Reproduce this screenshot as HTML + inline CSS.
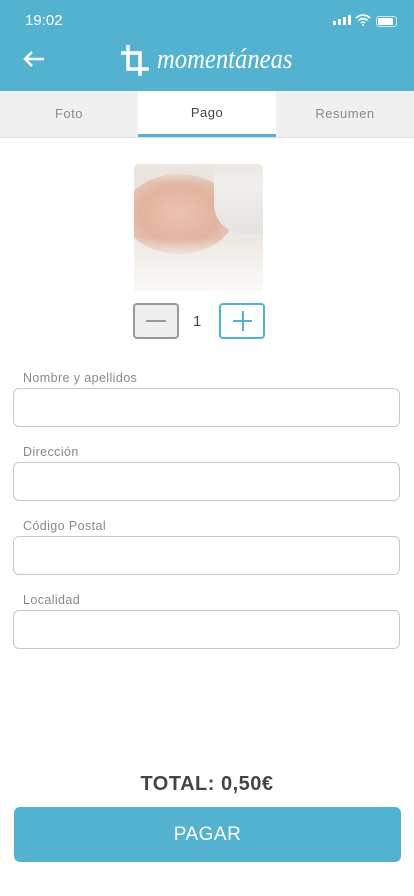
<!DOCTYPE html><html><head><meta charset="utf-8"><style>
*{margin:0;padding:0;box-sizing:border-box}
body{width:414px;height:896px;background:#fff;font-family:"Liberation Sans",sans-serif;position:relative;overflow:hidden}
.hdr{position:absolute;left:0;top:0;width:414px;height:91px;background:#52b2cf;color:#fff}
.tabs{position:absolute;top:91px;left:0;width:414px;height:47px;display:flex;background:#f0f0f0;border-bottom:1px solid #e0e0e0}
.tab{flex:1;text-align:center;line-height:46px;font-size:13px;color:#8a8a8a;letter-spacing:.5px}
.tab.a{background:#fff;color:#444;border-bottom:3px solid #52b2cf;line-height:44px}
.lbl{position:absolute;left:23px;font-size:12.5px;color:#888;letter-spacing:.4px}
.inp{position:absolute;left:13px;width:387px;height:39px;border:1px solid #c8c8c8;border-radius:6px}
</style></head><body>
<div class="hdr">
<div style="position:absolute;left:25px;top:12px;font-size:15px">19:02</div>
<div style="position:absolute;left:333px;top:15px;display:flex;gap:2px;align-items:flex-end"><i style="width:3px;height:4px;background:#fff"></i><i style="width:3px;height:6px;background:#fff"></i><i style="width:3px;height:8px;background:#fff"></i><i style="width:3px;height:10px;background:#fff"></i></div>
<svg style="position:absolute;left:355px;top:14px" width="16" height="12" viewBox="0 0 16 12"><path d="M1 4a10 10 0 0 1 14 0M3.5 6.5a6.5 6.5 0 0 1 9 0M6 9a3 3 0 0 1 4 0" stroke="#fff" stroke-width="1.8" fill="none"/><circle cx="8" cy="11" r="1" fill="#fff"/></svg>
<div style="position:absolute;left:376px;top:16px;width:21px;height:11px;border:1px solid rgba(255,255,255,.7);border-radius:3px;padding:1px"><div style="width:15px;height:7px;background:#fff;border-radius:1px"></div></div>
<svg style="position:absolute;left:22px;top:50px" width="24" height="18" viewBox="0 0 24 18"><path d="M22 9H3M10 2L3 9l7 7" stroke="#fff" stroke-width="2.5" fill="none"/></svg>
<svg style="position:absolute;left:120px;top:44px" width="30" height="33" viewBox="0 0 30 33"><path d="M8 1v24h21M1 9h19v23" stroke="#fff" stroke-width="3.5" fill="none"/></svg>
<div style="position:absolute;left:157px;top:44px;font-family:'Liberation Serif',serif;font-style:italic;font-size:28px;transform:scaleX(0.88);transform-origin:left">momentáneas</div>
</div>
<div class="tabs"><div class="tab">Foto</div><div class="tab a">Pago</div><div class="tab">Resumen</div></div>
<div style="position:absolute;left:134px;top:164px;width:129px;height:129px;border-radius:5px;overflow:hidden;background:linear-gradient(#e8e2dc,#f0ece8)">
<div style="position:absolute;left:-10px;top:10px;width:110px;height:80px;border-radius:50%;background:radial-gradient(ellipse,#ecc2ae 0,#e2b39f 50%,#e8d8ce 100%)"></div>
<div style="position:absolute;left:80px;top:0;width:60px;height:70px;background:linear-gradient(#f4f3f3,#e6e2e0);border-radius:0 0 0 30px"></div>
<div style="position:absolute;left:0;top:0;width:129px;height:20px;background:linear-gradient(#ece6df,#ece6df00)"></div>
<div style="position:absolute;left:0;bottom:0;width:129px;height:55px;background:linear-gradient(#f3efeb00,#f3efeb 40%,#fbfaf9)"></div></div>
<div style="position:absolute;left:133px;top:303px;width:46px;height:36px;border:2px solid #999;border-radius:4px;background:#eee"><div style="position:absolute;left:11px;top:15px;width:20px;height:2px;background:#999"></div></div>
<div style="position:absolute;left:193px;top:313px;font-size:15px;color:#444">1</div>
<div style="position:absolute;left:219px;top:303px;width:46px;height:36px;border:2px solid #52b2cf;border-radius:4px"><div style="position:absolute;left:12px;top:15px;width:19px;height:2px;background:#52b2cf"></div><div style="position:absolute;left:20.5px;top:6px;width:2px;height:20px;background:#52b2cf"></div></div>
<div class="lbl" style="top:371px">Nombre y apellidos</div><div class="inp" style="top:388px"></div>
<div class="lbl" style="top:445px">Dirección</div><div class="inp" style="top:462px"></div>
<div class="lbl" style="top:519px">Código Postal</div><div class="inp" style="top:536px"></div>
<div class="lbl" style="top:593px">Localidad</div><div class="inp" style="top:610px"></div>
<div style="position:absolute;left:0;width:414px;top:773px;text-align:center;font-size:20px;font-weight:bold;color:#444;letter-spacing:.5px">TOTAL: 0,50€</div>
<div style="position:absolute;left:14px;top:807px;width:387px;height:55px;background:#52b2cf;border-radius:6px;color:#fff;text-align:center;line-height:55px;font-size:19px;letter-spacing:.5px">PAGAR</div>
</body></html>
